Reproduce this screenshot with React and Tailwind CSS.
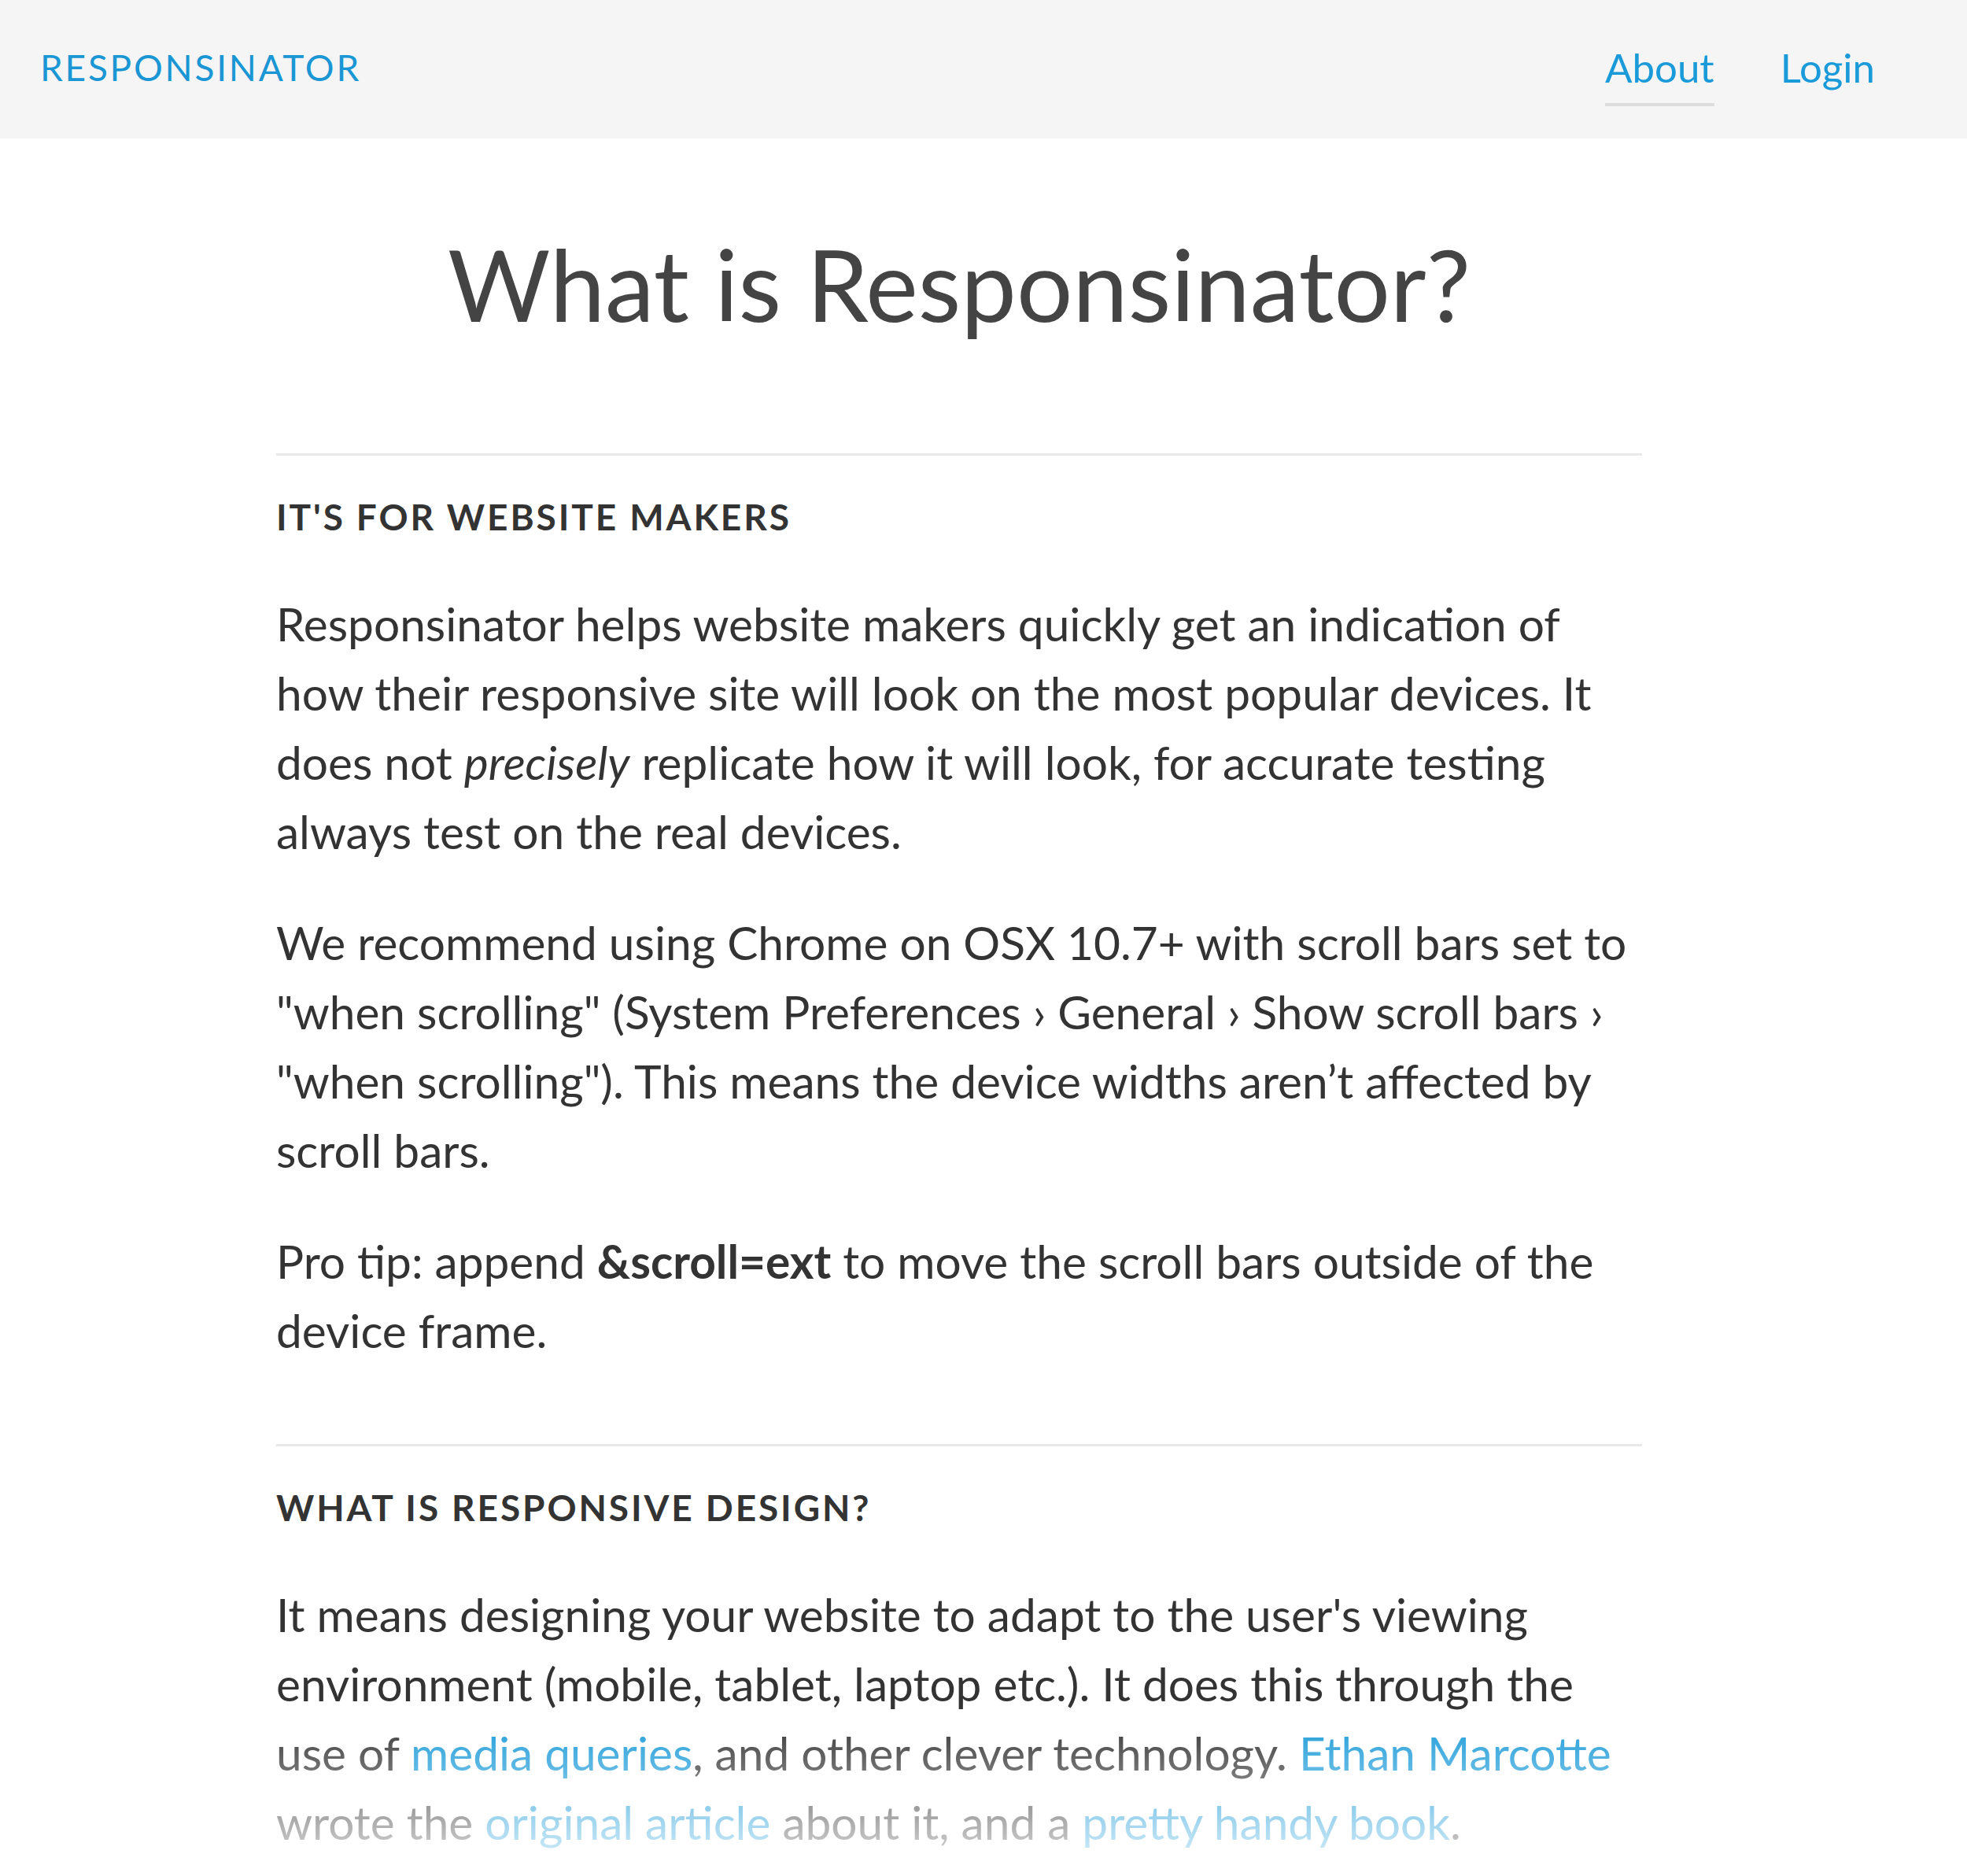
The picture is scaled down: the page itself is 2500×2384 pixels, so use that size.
import React from 'react';

const Link = ({ children, className = '' }) => (
  <a href="#" className={`text-[#1a9ad8] ${className}`}>
    {children}
  </a>
);

const Section = ({ title, children, first }) => (
  <section>
    <div className={`h-[3px] bg-[#e9e9e9] ${first ? 'mt-[152px]' : 'mt-[101px]'}`} />
    <h2 className="mt-[55px] text-[46px] leading-none font-bold tracking-[0.063em] text-[#333] uppercase">
      {title}
    </h2>
    <div className="mt-[68px] space-y-[53px] text-[58.6px] leading-[88px] text-[#333] whitespace-nowrap">
      {children}
    </div>
  </section>
);

export default function App() {
  return (
    <div className="relative h-[2384px] overflow-hidden bg-white font-['Lato','Noto_Sans',sans-serif]">
      {/* Top bar */}
      <header className="h-[176px] bg-[#f5f5f5] flex items-start justify-between pl-[51px] pr-[117px]">
        <a href="#" className="mt-[63px] text-[46px] leading-none tracking-[0.06em] text-[#1a96d4]">
          RESPONSINATOR
        </a>
        <nav className="mt-[60px] flex items-start gap-[84px] text-[51px] leading-none">
          <Link className="pb-[20px] border-b-4 border-[#dddddd]">About</Link>
          <Link className="pb-[20px] border-b-4 border-transparent">Login</Link>
        </nav>
      </header>

      <main className="ml-[351px] w-[1736px]">
        <h1 className="mt-[122px] text-center text-[126px] leading-none font-normal text-[#444]">
          What is Responsinator?
        </h1>

        <Section title="It's for website makers" first>
          <p>
            Responsinator helps website makers quickly get an indication of
            <br />
            how their responsive site will look on the most popular devices. It
            <br />
            does not <em>precisely</em> replicate how it will look, for accurate testing
            <br />
            always test on the real devices.
          </p>
          <p>
            We recommend using Chrome on OSX 10.7+ with scroll bars set to
            <br />
            "when scrolling" (System Preferences › General › Show scroll bars ›
            <br />
            "when scrolling"). This means the device widths aren’t affected by
            <br />
            scroll bars.
          </p>
          <p>
            Pro tip: append <strong className="font-bold">&amp;scroll=ext</strong> to move the scroll bars outside of the
            <br />
            device frame.
          </p>
        </Section>

        <Section title="What is responsive design?">
          <p>
            It means designing your website to adapt to the user's viewing
            <br />
            environment (mobile, tablet, laptop etc.). It does this through the
            <br />
            use of <Link>media queries</Link>, and other clever technology. <Link>Ethan Marcotte</Link>
            <br />
            wrote the <Link>original article</Link> about it, and a <Link>pretty handy book</Link>.
          </p>
        </Section>
      </main>

      {/* fade out at the bottom of the viewport */}
      <div className="absolute left-0 right-0 bottom-0 h-[204px] bg-linear-to-b from-white/0 to-white/90 pointer-events-none" />
    </div>
  );
}
